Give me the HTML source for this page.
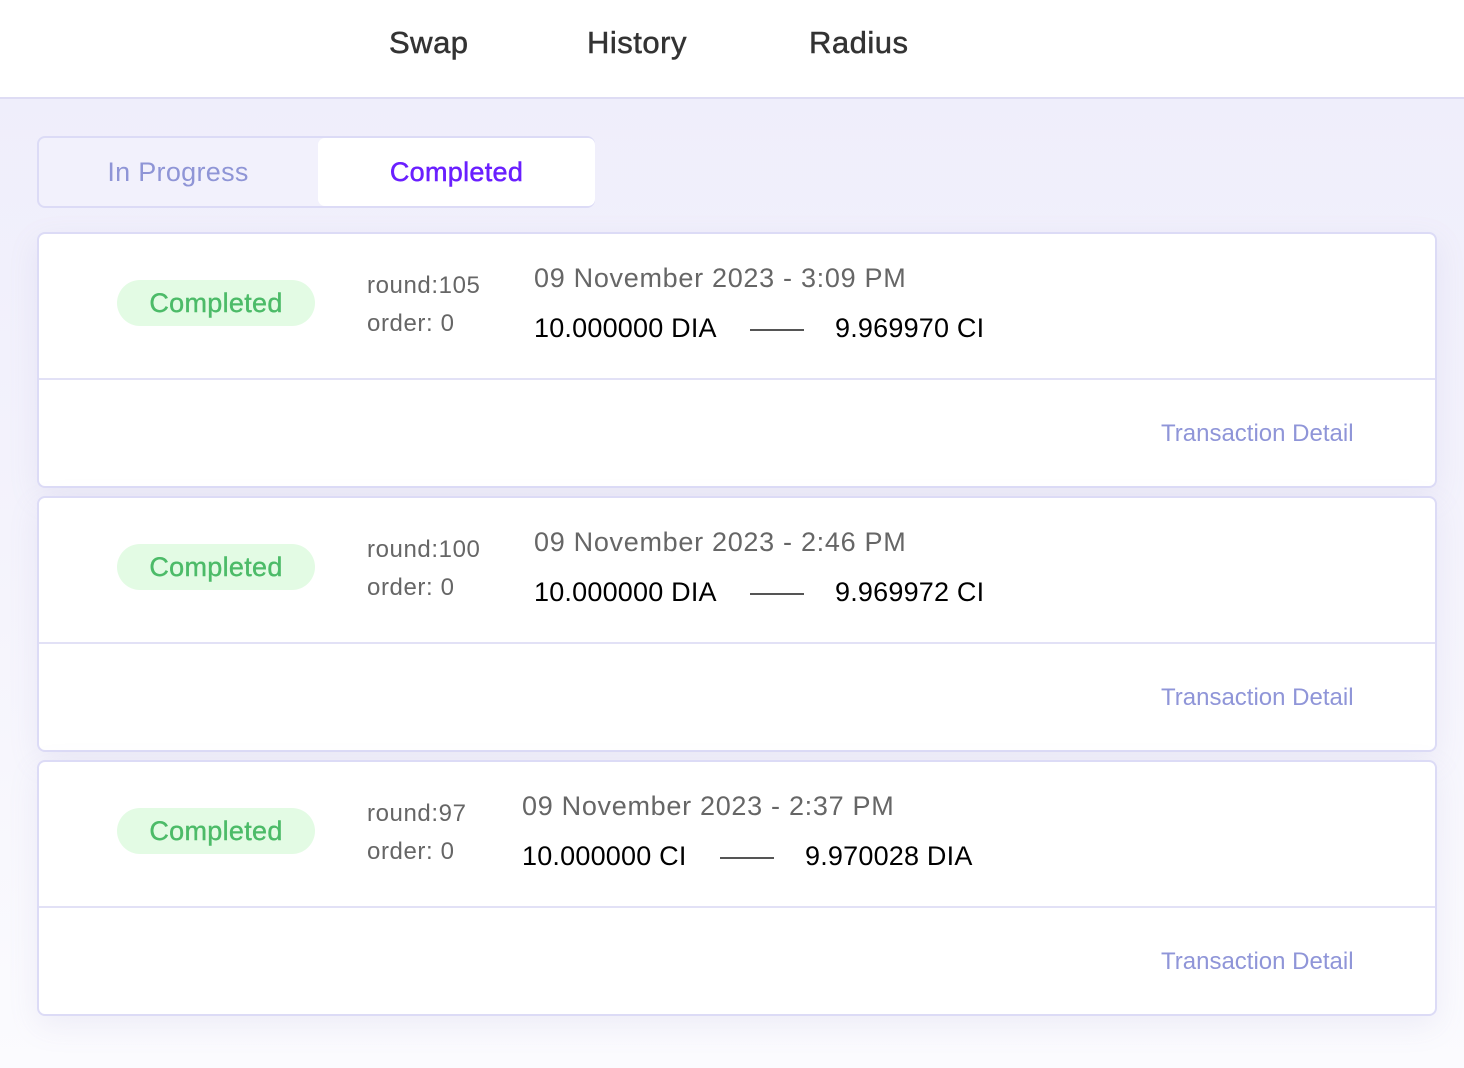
<!DOCTYPE html>
<html><head><meta charset="utf-8"><style>
*{margin:0;padding:0;box-sizing:border-box}
body{width:1464px;height:1068px;overflow:hidden;font-family:"Liberation Sans",sans-serif;background:linear-gradient(180deg,#eeedfb 0%,#f4f3fc 50%,#fbfbfe 100%);position:relative}
.hdr{position:absolute;left:0;top:0;width:1464px;height:99px;background:#fff;border-bottom:2px solid #dedcf4}
.nav{position:absolute;top:25px;font-size:31px;color:#333;letter-spacing:0.5px;-webkit-text-stroke:0.5px #333}
.tabs{position:absolute;left:37px;top:136px;width:558px;height:72px;background:#f2f1fc;border:2px solid #dcdbf6;border-radius:8px}
.tab{position:absolute;top:0;height:68px;line-height:68px;text-align:center;font-size:27px;letter-spacing:0.3px}
.card{position:absolute;left:37px;width:1400px;height:256px;background:#fff;border:2px solid #dcdbf6;border-radius:8px;box-shadow:0 10px 30px rgba(150,140,200,.12)}
.div{position:absolute;left:0;top:144px;width:100%;height:2px;background:#e2e1f6}
.badge{position:absolute;left:78px;top:46px;width:198px;height:46px;border-radius:23px;background:#e3fbe4;color:#4cbb68;font-size:27px;text-align:center;line-height:46px;letter-spacing:0.3px;-webkit-text-stroke:0.4px #4cbb68}
.t{position:absolute;white-space:nowrap}
.g{color:#666;font-size:24px;letter-spacing:0.6px}
.d{color:#666;font-size:27px;letter-spacing:0.7px}
.a{color:#000;font-size:27px;letter-spacing:0.2px}
.ln{position:absolute;height:2px;width:54px;background:#555}
.td{position:absolute;left:1122px;top:186px;color:#8f95d8;font-size:24px}
</style></head><body>
<div class="hdr">
<div class="nav" style="left:389px">Swap</div>
<div class="nav" style="left:587px">History</div>
<div class="nav" style="left:809px">Radius</div>
</div>
<div class="tabs">
<div class="tab" style="left:0;width:278px;color:#8f95d6">In Progress</div>
<div class="tab" style="left:279px;width:277px;background:#fff;border-radius:7px;color:#6a1fff;-webkit-text-stroke:0.5px #6a1fff">Completed</div>
</div>

<div class="card" style="top:232px">
<div class="badge">Completed</div>
<div class="t g" style="left:328px;top:38px">round:105</div>
<div class="t g" style="left:328px;top:76px">order: 0</div>
<div class="t d" style="left:495px;top:29px">09 November 2023 - 3:09 PM</div>
<div class="t a" style="left:495px;top:79px">10.000000 DIA</div>
<div class="ln" style="left:711px;top:95px"></div>
<div class="t a" style="left:796px;top:79px">9.969970 CI</div>
<div class="div"></div>
<div class="t td">Transaction Detail</div>
</div>

<div class="card" style="top:496px">
<div class="badge">Completed</div>
<div class="t g" style="left:328px;top:38px">round:100</div>
<div class="t g" style="left:328px;top:76px">order: 0</div>
<div class="t d" style="left:495px;top:29px">09 November 2023 - 2:46 PM</div>
<div class="t a" style="left:495px;top:79px">10.000000 DIA</div>
<div class="ln" style="left:711px;top:95px"></div>
<div class="t a" style="left:796px;top:79px">9.969972 CI</div>
<div class="div"></div>
<div class="t td">Transaction Detail</div>
</div>

<div class="card" style="top:760px">
<div class="badge">Completed</div>
<div class="t g" style="left:328px;top:38px">round:97</div>
<div class="t g" style="left:328px;top:76px">order: 0</div>
<div class="t d" style="left:483px;top:29px">09 November 2023 - 2:37 PM</div>
<div class="t a" style="left:483px;top:79px">10.000000 CI</div>
<div class="ln" style="left:681px;top:95px"></div>
<div class="t a" style="left:766px;top:79px">9.970028 DIA</div>
<div class="div"></div>
<div class="t td">Transaction Detail</div>
</div>
</body></html>
